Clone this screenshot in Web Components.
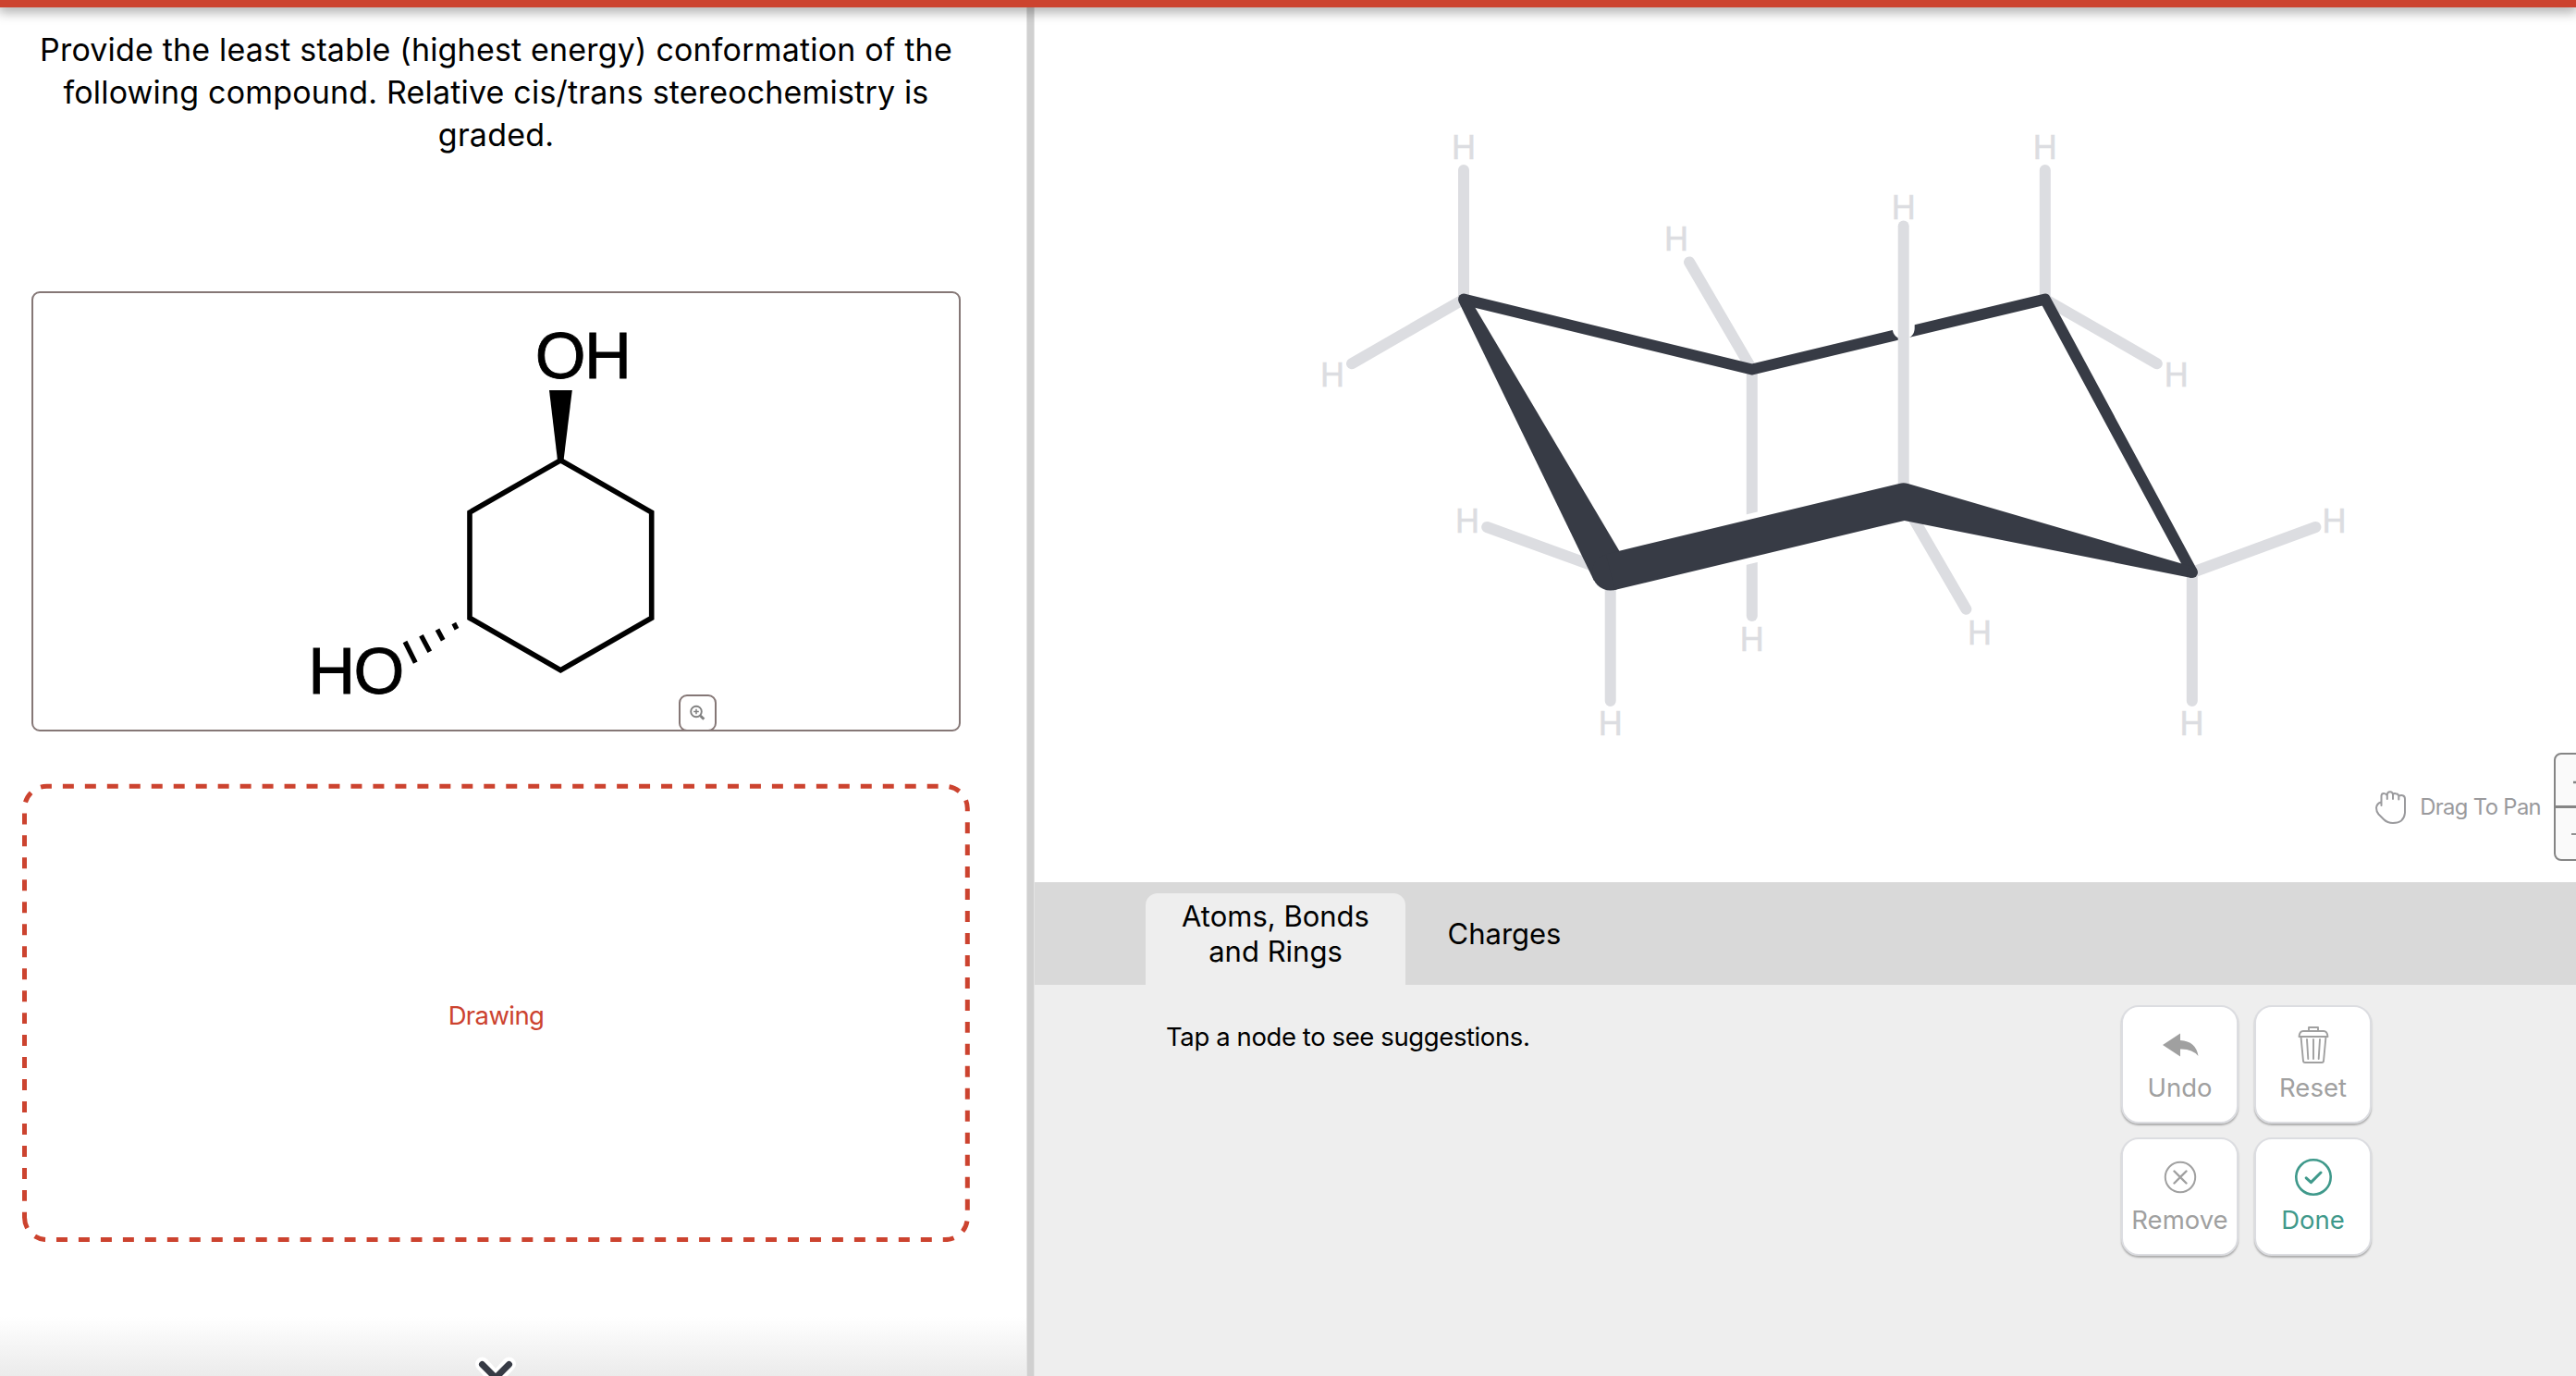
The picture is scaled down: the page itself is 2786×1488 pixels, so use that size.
<!DOCTYPE html>
<html lang="en">
<head>
<meta charset="utf-8">
<title>Chair conformation</title>
<style>
    html, body {
        margin: 0;
        height: 100%;
        overflow: hidden;
        background: #fff;
        font-family: Inter, "Open Sans", "Liberation Sans", sans-serif;
        color: #000;
    }
</style>
</head>
<body>
<chem-app>
    <question-pane slot="left">
        <question-text slot="prompt">Provide the least stable (highest energy) conformation of the following compound. Relative cis/trans stereochemistry is graded.</question-text>
        <compound-card slot="figure"></compound-card>
        <drawing-box slot="answer">Drawing</drawing-box>
    </question-pane>
    <chair-canvas slot="right"></chair-canvas>
    <tool-panel slot="right">
        <tool-tab slot="tabs" active style="width: 281px">Atoms, Bonds<br>and Rings</tool-tab>
        <tool-tab slot="tabs" style="width: 214px">Charges</tool-tab>
        <span slot="hint">Tap a node to see suggestions.</span>
        <tool-button slot="buttons" icon="undo">Undo</tool-button>
        <tool-button slot="buttons" icon="reset">Reset</tool-button>
        <tool-button slot="buttons" icon="remove">Remove</tool-button>
        <tool-button slot="buttons" icon="done">Done</tool-button>
    </tool-panel>
</chem-app>

<script>
class ChemApp extends HTMLElement {
    constructor() {
        super();
        this.attachShadow({mode: 'open'});
    }

    connectedCallback() {
        this.shadowRoot.innerHTML = `
            <style>
                :host {
                    display: flex;
                    flex-direction: column;
                    height: 100vh;
                }

                header {
                    flex: none;
                    height: 8px;
                    background: #cc432f;
                    box-shadow: 0 2px 14px 2px rgba(0, 0, 0, 0.4);
                    z-index: 2;
                }

                main {
                    display: flex;
                    flex: 1;
                    min-height: 0;
                }

                .left {
                    flex: none;
                    width: 1110px;
                }

                .divider {
                    flex: none;
                    width: 7px;
                    background: #d0d0d0;
                    border: solid #e4e4e4;
                    border-width: 0 1px;
                }

                .right {
                    display: flex;
                    flex-direction: column;
                    flex: 1;
                    min-width: 0;
                }
            </style>
            <header></header>
            <main>
                <div class="left"><slot name="left"></slot></div>
                <div class="divider"></div>
                <div class="right"><slot name="right"></slot></div>
            </main>
        `;
    }
}

class QuestionPane extends HTMLElement {
    constructor() {
        super();
        this.attachShadow({mode: 'open'});
    }

    connectedCallback() {
        this.shadowRoot.innerHTML = `
            <style>
                :host {
                    display: flex;
                    flex-direction: column;
                    height: 100%;
                    position: relative;
                    overflow: hidden;
                }

                .prompt {
                    height: 284px;
                    padding: 23px 71px 0 34px;
                }

                .figure {
                    padding: 0 71px 0 34px;
                }

                .answer {
                    padding: 56px 61px 0 24px;
                }

                .more {
                    position: absolute;
                    left: 0;
                    right: 0;
                    bottom: 0;
                    height: 64px;
                    background: linear-gradient(rgba(235, 235, 235, 0), #ebebeb);
                }

                svg {
                    display: block;
                    width: 1110px;
                    height: 64px;
                }
            </style>
            <div class="prompt"><slot name="prompt"></slot></div>
            <div class="figure"><slot name="figure"></slot></div>
            <div class="answer"><slot name="answer"></slot></div>
            <div class="more">
                <svg viewBox="0 1424 1110 64" fill="none" stroke-linecap="round" stroke-linejoin="round">
                    <path d="M521.5 1475 L536 1491 L550.5 1475" stroke="#fff" stroke-width="15"/>
                    <path d="M521.5 1475.5 L536 1490 L550.5 1475.5" stroke="#373b45" stroke-width="7"/>
                </svg>
            </div>
        `;
    }
}

class QuestionText extends HTMLElement {
    constructor() {
        super();
        this.attachShadow({mode: 'open'});
    }

    connectedCallback() {
        this.shadowRoot.innerHTML = `
            <style>
                :host {
                    display: block;
                    text-align: center;
                    font-size: 34px;
                    line-height: 46px;
                    letter-spacing: 0.18px;
                }
            </style>
            <slot></slot>
        `;
    }
}

class CompoundCard extends HTMLElement {
    constructor() {
        super();
        this.attachShadow({mode: 'open'});
    }

    connectedCallback() {
        this.shadowRoot.innerHTML = `
            <style>
                :host {
                    display: block;
                    box-sizing: border-box;
                    height: 476px;
                    border: 2px solid #857776;
                    border-radius: 9px;
                    position: relative;
                }

                svg.mol {
                    display: block;
                    width: 1001px;
                    height: 472px;
                }

                text {
                    font: 70.5px "Liberation Sans", Arial, sans-serif;
                    letter-spacing: -1.6px;
                    stroke: #000;
                    stroke-width: 0.8;
                }

                .magnify {
                    position: absolute;
                    left: 698px;
                    bottom: -2px;
                    box-sizing: border-box;
                    width: 41px;
                    height: 40px;
                    border: 2px solid #857776;
                    border-radius: 9px;
                    background: #fff;
                }

                .magnify svg {
                    display: block;
                }
            </style>
            <svg class="mol" viewBox="36 317 1001 472">
                <path d="M606.3 497.7 L704.7 554 V668.3 L606.3 724.7 L508 668.3 V554 Z" fill="none" stroke="#000" stroke-width="5.6"/>
                <path d="M594 422 H618.8 L609.5 498 H603 Z"/>
                <path d="M438 694 L449.3 716.7 M455.5 687.3 L464.8 704.7 M473 680.7 L479.2 692.2 M490.8 674 L494 680.2" stroke="#000" stroke-width="5.2"/>
                <text x="578.8" y="409">OH</text>
                <text x="333.2" y="749.5">HO</text>
            </svg>
            <div class="magnify">
                <svg width="37" height="36" viewBox="736 753 37 36" fill="none" stroke="#808080" stroke-width="1.9">
                    <circle cx="753" cy="769.5" r="5.8"/>
                    <path d="M753 766.7 V772.3 M750.2 769.5 H755.8" stroke-width="1.5"/>
                    <path d="M757.5 774 L761.3 777.8" stroke-width="3"/>
                </svg>
            </div>
        `;
    }
}

class DrawingBox extends HTMLElement {
    constructor() {
        super();
        this.attachShadow({mode: 'open'});
    }

    connectedCallback() {
        this.shadowRoot.innerHTML = `
            <style>
                :host {
                    display: grid;
                    width: 1025px;
                    height: 496px;
                    place-items: center;
                    font-size: 27.5px;
                    letter-spacing: -0.6px;
                    color: #cc432f;
                }

                svg, span {
                    grid-area: 1 / 1;
                }

                span {
                    padding-top: 6px;
                }
            </style>
            <svg width="1025" height="496" viewBox="24 847 1025 496">
                <path d="M26.5 1316.6 A24 24 0 0 0 50.5 1340.6 H1022.3 A24 24 0 0 0 1046.3 1316.6 V874.3 A24 24 0 0 0 1022.3 850.3 H50.5 A24 24 0 0 0 26.5 874.3 Z"
                    fill="none" stroke="#cc432f" stroke-width="5" stroke-dasharray="11.985"/>
            </svg>
            <span><slot></slot></span>
        `;
    }
}

class ChairCanvas extends HTMLElement {
    constructor() {
        super();
        this.attachShadow({mode: 'open'});
    }

    connectedCallback() {
        // [x, baseline] of each hydrogen
        const hydrogens = [
            [1583, 171.8], [1440.9, 417.8], [1812.9, 270.9], [1587.1, 575.8],
            [1741.7, 795.4], [1894.8, 703.9], [2058.7, 237], [2211.8, 171.8],
            [2353.7, 417.8], [2524.5, 575.8], [2370.6, 795.4], [2141, 696.8]
        ];
        const labels = hydrogens.map(([x, y]) => `<text x="${x}" y="${y}">H</text>`).join('');

        this.shadowRoot.innerHTML = `
            <style>
                :host {
                    display: block;
                    flex: none;
                    height: 946px;
                    position: relative;
                    overflow: hidden;
                }

                svg.chair {
                    display: block;
                    width: 1667px;
                    height: 946px;
                }

                text {
                    font: 36px "Liberation Sans", Arial, sans-serif;
                    fill: #dcdde1;
                    stroke: #dcdde1;
                    stroke-width: 0.5;
                    text-anchor: middle;
                }

                .h {
                    stroke: #dcdde1;
                    stroke-width: 12;
                    stroke-linecap: round;
                }

                .gap {
                    stroke: #fff;
                }

                .ring {
                    fill: none;
                    stroke: #373b45;
                    stroke-width: 12;
                    stroke-linejoin: round;
                }

                .wedge {
                    fill: #373b45;
                }

                /* controls float over the canvas */
                .controls {
                    position: absolute;
                    right: -36px;
                    bottom: 23px;
                    display: flex;
                    align-items: center;
                    color: #9a9a9d;
                    font-size: 23.8px;
                    letter-spacing: -0.65px;
                }

                .pan {
                    padding: 0 14px 0 14px;
                }

                .zoom {
                    width: 56px;
                    border: 2px solid #858585;
                    border-radius: 8px;
                    background: #fafafa;
                }

                .zoom svg {
                    display: block;
                }

                .zoom svg + svg {
                    border-top: 3px solid #858585;
                }
            </style>
            <svg class="chair" viewBox="1119 8 1667 946">
                <path class="h" d="M1894.8 399.5 V666"/>
                <path class="gap" d="M1800 605 L2000 556.8" stroke-width="53"/>
                <path class="h" d="M1583 184 V323 M1583 323.6 L1462 393.2 M1827 283.4 L1894.8 399.5 M1608.2 570 L1741.7 618.7 M1741.7 618.7 V758" fill="none"/>
                <path class="h" d="M2211.8 184 V323.6 M2211.8 323.6 L2332.8 393.2 M2371 619 L2504.4 570 M2370.8 619 V758 M2058.7 542.3 L2126.4 658.8" fill="none"/>
                <path class="ring" d="M1583 323.6 L1894.8 399.5 L2211.8 323.6 L2371 619"/>
                <circle class="wedge" cx="1583" cy="323.6" r="6"/>
                <path class="gap" d="M2058.7 250 V355" stroke-width="24" stroke-linecap="round"/>
                <path class="h" d="M2058.7 244.5 V542"/>
                <path class="wedge" d="M1588.3 320.8 L1759.3 609.2 L1724.1 628.2 L1577.7 326.4 Z"/>
                <circle class="wedge" cx="1741.7" cy="618.7" r="19.8"/>
                <path class="wedge" d="M1737 599.2 L2054 522.9 Q2058.7 521.8 2063.5 522.9 L2372.4 613.2 L2370 625 L2059.7 562.9 L1746.4 638 Z"/>
                <circle class="wedge" cx="2371" cy="619" r="6"/>
                ${labels}
            </svg>
            <div class="controls">
                <svg width="34" height="36" viewBox="0 0 34 36" fill="none" stroke="#9a9a9d" stroke-width="2" stroke-linecap="round" stroke-linejoin="round">
                    <path d="M6.5 16 V5.5 Q6.8 3 9 3 Q11.5 3 12.5 5 M12.8 9 V4.5 Q13 1.2 16 1.2 Q18.5 1.2 19 4 M19 9 V4 Q20 2.8 22 3.2 Q25 3.5 25.3 6 M25.3 9.5 V6.2 Q26.5 4.8 29.5 5.2 Q32 5.8 32 9 V24 Q31 35 19 35 Q13 35 9 31 L3.5 25.5 Q1 22.5 1 18.5 Q1.5 14 6 12.5"/>
                </svg>
                <span class="pan">Drag To Pan</span>
                <div class="zoom">
                    <svg width="56" height="55" viewBox="0 0 56 55" stroke="#858585" stroke-width="2.6"><path d="M19 30 H37 M28 21 V39"/></svg>
                    <svg width="56" height="55" viewBox="0 0 56 55" stroke="#858585" stroke-width="1.8"><path d="M17 28 H39"/></svg>
                </div>
            </div>
        `;
    }
}

class ToolPanel extends HTMLElement {
    constructor() {
        super();
        this.attachShadow({mode: 'open'});
    }

    connectedCallback() {
        this.shadowRoot.innerHTML = `
            <style>
                :host {
                    display: flex;
                    flex-direction: column;
                    flex: 1;
                    background: #eee;
                }

                nav {
                    display: flex;
                    align-items: stretch;
                    box-sizing: border-box;
                    height: 111px;
                    padding: 12px 0 0 120px;
                    background: #d9d9d9;
                }

                .body {
                    display: flex;
                    justify-content: space-between;
                    padding: 22px 221px 0 142px;
                }

                .hint {
                    padding-top: 17px;
                    font-size: 27.5px;
                    line-height: 34px;
                    letter-spacing: -0.4px;
                }

                .buttons {
                    display: grid;
                    grid-template-columns: 127px 127px;
                    grid-auto-rows: 128px;
                    gap: 15px 17px;
                }
            </style>
            <nav><slot name="tabs"></slot></nav>
            <div class="body">
                <div class="hint"><slot name="hint"></slot></div>
                <div class="buttons"><slot name="buttons"></slot></div>
            </div>
        `;
    }
}

class ToolTab extends HTMLElement {
    constructor() {
        super();
        this.attachShadow({mode: 'open'});
    }

    connectedCallback() {
        this.shadowRoot.innerHTML = `
            <style>
                :host {
                    display: flex;
                    justify-content: center;
                    align-items: center;
                    box-sizing: border-box;
                    padding-bottom: 11px;
                    border-radius: 13px 13px 0 0;
                    text-align: center;
                    font-size: 31px;
                    line-height: 38px;
                }

                :host([active]) {
                    background: #eee;
                }
            </style>
            <span><slot></slot></span>
        `;
    }
}

const ICONS = {
    undo: '<path d="M-19 0 L0 -12.5 V-5 Q17 -4 19.5 12 Q13 4 0 4.5 V12.5 Z" fill="currentColor" stroke="none"/>',
    reset: '<g stroke-width="1.9"><path d="M-5 -15 V-19 H5 V-15 M-11 -15 H11 Q15 -15 15.5 -9 H-15.5 Q-15 -15 -11 -15 Z M-13.5 -9 L-11 17.5 Q-10.8 19 -9 19 H9 Q10.8 19 11 17.5 L13.5 -9 M-7 -6 L-5.7 15 M0 -6 V15 M7 -6 L5.7 15"/></g>',
    remove: '<circle r="16.2" stroke-width="2"/><path d="M-6.5 -6.5 L6.5 6.5 M6.5 -6.5 L-6.5 6.5" stroke-width="2.4"/>',
    done: '<circle r="18.7" stroke-width="2.6"/><path d="M-7.8 0.8 L-2.6 5.6 L8 -5" stroke-width="3"/>'
};

class ToolButton extends HTMLElement {
    constructor() {
        super();
        this.attachShadow({mode: 'open'});
    }

    connectedCallback() {
        const icon = this.getAttribute('icon');

        this.shadowRoot.innerHTML = `
            <style>
                :host {
                    display: flex;
                    flex-direction: column;
                    align-items: center;
                    box-sizing: border-box;
                    padding-top: 20px;
                    border: 2px solid #dcdde1;
                    border-radius: 19px;
                    background: #fff;
                    box-shadow: 0 2px 2px rgba(0, 0, 0, 0.28);
                    color: #a0a0a0;
                    font-size: 27.5px;
                    line-height: 34px;
                }

                :host([icon="done"]) {
                    color: #3f998b;
                }

                svg {
                    display: block;
                    margin-bottom: 8px;
                }
            </style>
            <svg width="42" height="42" viewBox="-21 -21 42 42" fill="none" stroke="currentColor" stroke-linecap="round" stroke-linejoin="round">${ICONS[icon]}</svg>
            <slot></slot>
        `;
    }
}

customElements.define('chem-app', ChemApp);
customElements.define('question-pane', QuestionPane);
customElements.define('question-text', QuestionText);
customElements.define('compound-card', CompoundCard);
customElements.define('drawing-box', DrawingBox);
customElements.define('chair-canvas', ChairCanvas);
customElements.define('tool-panel', ToolPanel);
customElements.define('tool-tab', ToolTab);
customElements.define('tool-button', ToolButton);
</script>
</body>
</html>
